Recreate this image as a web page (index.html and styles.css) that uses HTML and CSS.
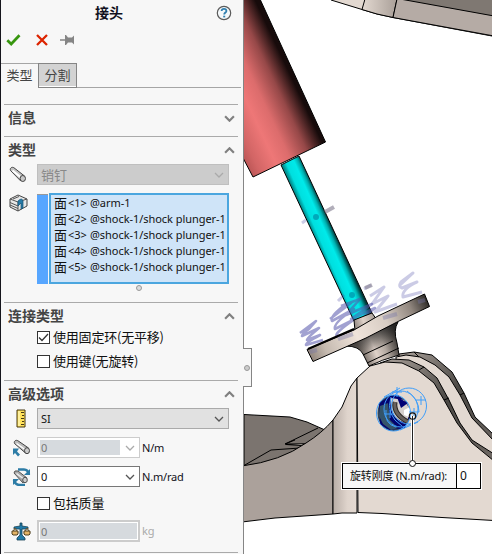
FILE: index.html
```html
<!DOCTYPE html>
<html lang="zh-CN">
<head>
<meta charset="utf-8">
<title>接头</title>
<link rel="stylesheet" href="styles.css">
</head>
<body>
<div class="app">
<aside class="panel">
  <header class="title"><h1>接头</h1>
    <svg class="help" width="16" height="16" viewBox="0 0 16 16"><circle cx="8" cy="8" r="6.7" fill="#f4f8fa" stroke="#5a5a5a" stroke-width="1.2"/><path d="M5.600 6C5.700 4.500 6.700 3.800 8 3.800s2.400.8 2.400 2.100C10.400 7.500 8.200 7.600 8.200 9.600" fill="none" stroke="#2f7faf" stroke-width="1.800"/><path d="M7.200 10.700h2v1.700h-2z" fill="#2f7faf"/></svg>
  </header>
  <div class="actions">
    <svg width="15" height="14" viewBox="0 0 15 14"><path d="M1.300 7.200 5.200 11 13.500 2.200" fill="none" stroke="#37960f" stroke-width="2.700"/></svg>
    <svg width="12" height="12" viewBox="0 0 12 12"><path d="M1 1 11 11M11 1 1 11" stroke="#dc2400" stroke-width="2.300"/></svg>
    <svg width="15" height="12" viewBox="0 0 15 12"><path d="M0 6h6" stroke="#858585" stroke-width="1.500"/><path d="M5 1h1l2 2.500h4L14 1.500v9l-2-2H8L6 11H5z" fill="#858585"/></svg>
  </div>
  <nav class="tabs"><span class="tab on">类型</span><span class="tab off">分割</span></nav>

  <section class="group info"><div class="head"><h2>信息</h2><svg class="chev" viewBox="0 0 10 6"><path d="M1 1 5 5 9 1"/></svg></div></section>

  <section class="group kind">
    <div class="head"><h2>类型</h2><svg class="chev" viewBox="0 0 10 6"><path d="M1 5 5 1 9 5"/></svg></div>
    <div class="row">
      <div class="icon"><svg width="18" height="18" viewBox="0 0 18 18"><path d="M1.500 4.500C.5 2 3 .5 5 1.800L15.500 10l-4 4.800z" fill="#c4c4c4" stroke="#444"/><path d="M3.500 4.500 12 11.500" stroke="#fff" stroke-width="2"/><ellipse cx="13.800" cy="12.500" rx="2.700" ry="3" fill="#c8c8c8" stroke="#444"/></svg></div>
      <div class="combo disabled"><span>销钉</span><svg class="arrow" viewBox="0 0 10 6"><path d="M1 1 5 5 9 1"/></svg></div>
    </div>
    <div class="row pick">
      <div class="icon top"><svg width="19" height="18" viewBox="0 0 19 18"><path d="M1 5 9 1l9 4v7l-9 5-8-4z" fill="#e8e8e8" stroke="#444"/><path d="M1 5l8 3 9-3M9 8v9M1 8.500l8 3.500M1 11l8 3.500M4 5l6-2.500" fill="none" stroke="#555"/><path d="M9 7q4-4 5 0v7l-2 1V9l-3 3z" fill="#287ba7" stroke="#155174" stroke-width=".7"/></svg></div>
      <div class="bar"></div>
      <ul class="list">
        <li><b>面</b><i>&lt;1&gt;</i><span>@arm-1</span></li>
        <li><b>面</b><i>&lt;2&gt;</i><span>@shock-1/shock plunger-1</span></li>
        <li><b>面</b><i>&lt;3&gt;</i><span>@shock-1/shock plunger-1</span></li>
        <li><b>面</b><i>&lt;4&gt;</i><span>@shock-1/shock plunger-1</span></li>
        <li><b>面</b><i>&lt;5&gt;</i><span>@shock-1/shock plunger-1</span></li>
      </ul>
    </div>
    <div class="grip"></div>
  </section>

  <section class="group link">
    <div class="head"><h2>连接类型</h2><svg class="chev" viewBox="0 0 10 6"><path d="M1 5 5 1 9 5"/></svg></div>
    <div class="check"><span class="box"><svg width="11" height="11" viewBox="0 0 11 11"><path d="M1 5.500 4 8.500 10 2" fill="none" stroke="#333" stroke-width="1.300"/></svg></span>使用固定环(无平移)</div>
    <div class="check"><span class="box"></span>使用键(无旋转)</div>
  </section>

  <section class="group adv">
    <div class="head"><h2>高级选项</h2><svg class="chev" viewBox="0 0 10 6"><path d="M1 5 5 1 9 5"/></svg></div>
    <div class="row">
      <div class="icon"><svg width="10" height="19" viewBox="0 0 10 19"><path d="M1 1h8v17H1z" fill="#ffe15b" stroke="#443713"/><path d="M2 2h2v15H2z" fill="#fff09b"/><path d="M5 3.500h3M6 6.500h2M5 9.500h3M6 12.500h2M5 15.500h3" stroke="#443713"/></svg></div>
      <div class="combo"><span>SI</span><svg class="arrow" viewBox="0 0 10 6"><path d="M1 1 5 5 9 1"/></svg></div>
    </div>
    <div class="row">
      <div class="icon"><svg width="19" height="18" viewBox="0 0 19 18"><path d="M2.500 4.500C1.500 2 4 .5 6 1.800L16.500 9l-3 5z" fill="#bbb" stroke="#444"/><path d="M4.500 4.500 13 10.500" stroke="#fff" stroke-width="1.500"/><ellipse cx="15" cy="11.700" rx="2.500" ry="3" fill="#ccc" stroke="#444"/><path d="M1 9.500v6.500l2-2 3 3.500 2-2-3-3 2-3z" fill="#2d7ca6"/></svg></div>
      <div class="field narrow disabled"><span class="value">0</span><svg class="arrow" viewBox="0 0 10 6"><path d="M1 1 5 5 9 1"/></svg></div><span class="unit">N/m</span>
    </div>
    <div class="row">
      <div class="icon"><svg width="19" height="18" viewBox="0 0 19 18"><path d="M6 1.500h6q4 0 5 5M13 17H8q-5 0-6-5" fill="none" stroke="#2d7ca6" stroke-width="2.500"/><path d="M18 1v6h-6zM1 17v-6h6z" fill="#2d7ca6"/><path d="M2 5q0-3 4-2l9 7-4 5z" fill="#aaa" stroke="#555"/><path d="M4.500 5.500l8 6" stroke="#eee" stroke-width="1.500"/><ellipse cx="13" cy="12" rx="2.300" ry="2.700" fill="#ccc" stroke="#555"/></svg></div>
      <div class="field narrow"><span class="value">0</span><svg class="arrow" viewBox="0 0 10 6"><path d="M1 1 5 5 9 1"/></svg></div><span class="unit">N.m/rad</span>
    </div>
    <div class="check"><span class="box"></span>包括质量</div>
    <div class="row mass">
      <div class="icon"><svg width="20" height="19" viewBox="0 0 20 19"><path d="M9 1h2v3l6 1v2h-6v6l3 3v2H6v-2l3-3V7H3V5l6-1z" fill="#217aa8" stroke="#174257" stroke-width=".8"/><path d="M1.500 10.500 4 6l3 4.500M13 10.500 16 6l3 4.500" fill="none" stroke="#755628"/><path d="M1 9h6v3l-1 1H2l-1-1zM13 9h6v3l-1 1h-4l-1-1z" fill="#e5b568" stroke="#51401e"/></svg></div>
      <div class="field disabled flat"><span class="value">0</span></div><span class="unit dim">kg</span>
    </div>
  </section>
  <div class="group end"></div>
</aside>

<main class="view">
<svg class="scene" width="248" height="554" viewBox="244 0 248 554">
  <defs>
    <linearGradient id="red" gradientUnits="userSpaceOnUse" x1="251" y1="178" x2="323" y2="144"><stop offset="0" stop-color="#b85454"/><stop offset=".13" stop-color="#d26565"/><stop offset=".36" stop-color="#ee7777"/><stop offset=".55" stop-color="#dc6c6c"/><stop offset=".78" stop-color="#964848"/><stop offset="1" stop-color="#170b0b"/></linearGradient>
    <linearGradient id="cyan" gradientUnits="userSpaceOnUse" x1="317" y1="242" x2="335" y2="234"><stop offset="0" stop-color="#009090"/><stop offset=".2" stop-color="#00dfdf"/><stop offset=".6" stop-color="#00eaea"/><stop offset=".8" stop-color="#00b0b0"/><stop offset="1" stop-color="#003c3c"/></linearGradient>
    <linearGradient id="disc" gradientUnits="userSpaceOnUse" x1="309" y1="357" x2="427" y2="300"><stop offset="0" stop-color="#8d8178"/><stop offset=".14" stop-color="#c5bab0"/><stop offset=".4" stop-color="#efe3da"/><stop offset=".65" stop-color="#d8cdc4"/><stop offset=".86" stop-color="#91877f"/><stop offset="1" stop-color="#302d2a"/></linearGradient>
    <linearGradient id="neck" gradientUnits="userSpaceOnUse" x1="361" y1="354" x2="399" y2="339"><stop offset="0" stop-color="#6d655f"/><stop offset=".35" stop-color="#dfd2c9"/><stop offset=".6" stop-color="#b3a9a1"/><stop offset="1" stop-color="#282523"/></linearGradient>
    <linearGradient id="shade" gradientUnits="userSpaceOnUse" x1="375" y1="329" x2="382" y2="348"><stop offset="0" stop-color="#222" stop-opacity=".8"/><stop offset="1" stop-color="#222" stop-opacity="0"/></linearGradient>
    <linearGradient id="edge"><stop offset="0" stop-color="#b8ada6"/><stop offset=".6" stop-color="#dfd4cc"/><stop offset="1" stop-color="#e3d9d1"/></linearGradient>
    <linearGradient id="strip" x1="0" y1="0" x2=".7" y2="1"><stop offset="0" stop-color="#aca39c"/><stop offset=".45" stop-color="#4a4743"/><stop offset="1" stop-color="#78716c"/></linearGradient>
    <linearGradient id="roof"><stop offset="0" stop-color="#e3d9d1"/><stop offset="1" stop-color="#a99f98"/></linearGradient>
  </defs>
  <g stroke="#000" stroke-width="1" stroke-linejoin="round">
    <path d="M331 0 362 9.500 377 14 393 17.500 492 36V-2H331z" fill="#e3d9d1"/>
    <path d="M365-1 362 9.500 377 14 393 17.500 397-1z" fill="url(#roof)"/>
    <path d="M397-1 393 17.500 494 36V-1z" fill="#b5aba5"/>
    <path d="M400-1 494 16V-2z" fill="#7f7872"/>

    <path d="M399 354 414 352 432 355 452 372 464 393 475 417 494 435V520L400 500z" fill="url(#strip)"/>
    <path d="M396 357 406 355 420 357 435 365 449 377 460 395 472 418 494 441V520L400 500z" fill="#e3d9d1"/>
    <path d="M380 363 392 359 409 360 424 367 437 378 449 400 460 423 472 440 494 454V520L400 500z" fill="url(#strip)"/>
    <path d="M244 414.500 290 417 307 422 325 430 310 450 244 470z" fill="#7b746f"/>
    <path d="M318 428 285 444 307 444.500 300 448 271 450 244 465.500M285 444l10-4" fill="none"/>
    <path d="M286 444.500l22-1-7 2z" fill="#e5dcd5"/>
    <path d="M242 466Q281 461 306 443 322 433 333 420V514L275 518 242 522z" fill="#aba19b"/>
    <path d="M333 420 342 407 351 386 357 378V513H342L333 514z" fill="url(#edge)"/>
    <path d="M357 378 370 366 385 362 402 363 419 371 434 383 444 400 457 423 472 443 494 461V520.500L442 517.500 382 513.500 358 512.500z" fill="#e3d9d1"/>
    <path d="M444 400l5-2M460 395l4-2M419 357l-5-5M424 367l-5 3" fill="none"/>

    <path d="M242-2H259.500L325.500 142 253 177 242 156z" fill="url(#red)"/>
    <path d="M281 165 299 156 372 313 354 321z" fill="url(#cyan)"/>
  </g>
  <g fill="none" stroke="#5555ac" stroke-width="2.600" stroke-linejoin="round" opacity=".55">
    <path d="M300 333 316 321 309 329Q302 334 302 336L319 328Q307 338 307 340L320 335Q305 343 306 345L323 340"/>
    <path d="M330 319 351 303 341 308Q330 317 332 321L354 309Q333 323 335 329L355 319Q333 334 337 336L352 334"/>
    <path d="M341 306 360 299 346 315 372 304 351 319 375 308 358 322"/>
  </g>
  <g fill="none" stroke="#5555ac" stroke-width="3" stroke-linejoin="round" opacity=".3">
    <path d="M399 286 413 273 401 282Q398 287 402 288L417 282Q401 290 403 297L422 292"/>
    <path d="M370 296 384 287 372 304 388 296 375 312 397 304M338 301l6-6M302 223l4-3M364 289l7-4"/>
  </g>
  <circle cx="316" cy="217" r="3" fill="#00a9ba"/><circle cx="352" cy="295" r="3" fill="#00a9ba"/>
  <path d="M325 212 334 207M365 288l7-3" stroke="#918c9d" stroke-width="4" opacity=".7"/>
  <path d="M354 320 372 313 377 320 355 331z" fill="url(#neck)" stroke="#000"/>
  <g stroke="#000">
    <path d="M346 346Q359 346 363 354L369 366Q381 360 399 355L397 343Q393 330 398 322z" fill="url(#neck)"/>
    <path d="M346 346Q360 347 364 355L396 341Q393 332 397 322z" fill="url(#shade)" stroke="none"/>
    <path d="M363 355 393 341M367 363 399 348" fill="none"/>
    <path d="M307 349.500 354 330 378 316 424.500 294 429.500 306.500 399 321 366 338 313 361.500z" fill="url(#disc)"/>
    <path d="M308 349 354 329" stroke-width="2" fill="none"/>
  </g>
  <path d="M338 339l15-5M383 318l14-4M310 352l7-2M418 302l7-2" stroke="#7777a8" stroke-width="4" opacity=".4"/>

  <g>
    <ellipse cx="393.500" cy="413" rx="16" ry="18" fill="#33485a"/>
    <path d="M379 403 390 396 398 395 407 404 410 416 405 428 389 430 380 424z" fill="#04046e"/>
    <path d="M380 406l8-3 2 17 8 8-7 2-8-6-4-8z" fill="#34546a"/>
    <path d="M391 398Q388 418 406 423L411 411 404 400z" fill="#d6d0cd"/>
    <path d="M397 397 408 403 401 408z" fill="#000075"/>
    <path d="M404 410 410 407 412 418 404 415z" fill="#fff"/>
    <path d="M395 402Q393 414 408 422" fill="none" stroke="#292522" stroke-width="5"/>
    <path d="M395 402Q393 414 408 422" fill="none" stroke="#68615c" stroke-width="3"/>
    <g fill="none" stroke="#3f9efa"><ellipse cx="393.500" cy="413" rx="17" ry="18"/><ellipse cx="409" cy="406" rx="17.500" ry="18"/><ellipse cx="401" cy="409" rx="17" ry="18"/><path d="M384 397 400 388M400 430 418 422M386 410Q384 424 396 427M391 397Q385 415 402 426M407 391Q419 399 419 412M397 387v10M392 392h10M421 396v9M416 400h10M390 410v8M385 414h9M414 408v8M409 412h10"/></g>
  </g>
  <path d="M412.500 416V463" stroke="#fff" stroke-width="3"/><path d="M412.500 416V463" stroke="#222"/>
  <circle cx="412.500" cy="416" r="3.200" fill="none" stroke="#111" stroke-width="1.200"/>
</svg>
<div class="handle"><span></span></div>
<div class="callout"><span class="label">旋转刚度 (N.m/rad):</span><span class="num">0</span></div>
<div class="pin"></div>
</main>
</div>
</body>
</html>
```
FILE: styles.css
```css
* { box-sizing: border-box; }
body { margin: 0; width: 492px; height: 554px; overflow: hidden; background: #fff; font: 11px/16px "Noto Sans", "Noto Sans CJK SC", sans-serif; color: #111; }
h1, h2, ul { margin: 0; padding: 0; }
svg { display: block; flex: none; }
.app { display: flex; height: 554px; }
.panel { flex: none; width: 244px; height: 554px; background: #f7f7f7; border-left: 1px solid #15151c; border-right: 1px solid #858585; }
.title { display: flex; height: 26px; align-items: center; padding-left: 94px; }
.title h1 { font: bold 14px/20px "Noto Sans CJK SC", sans-serif; flex: 1; color: #111120; margin-top: -2px; }
.help { margin-right: 11px; }
.actions { display: flex; height: 37px; align-items: center; padding: 0 0 9px 5px; }
.actions svg:nth-child(2) { margin-left: 15px; }
.actions svg:nth-child(3) { margin-left: 12px; }
.tabs { display: flex; height: 25px; width: 240px; border-bottom: 1px solid #a5a5a5; }
.tab { height: 25px; border-top: 1px solid #a5a5a5; font: 13px/21px "Noto Sans CJK SC", sans-serif; text-align: center; color: #444; }
.tab.on { background: #f7f7f7; width: 37px; }
.tab.off { width: 39px; border: 1px solid #858585; background: #d3d3d3; box-shadow: inset 0 -1px #fff; }
.group { margin: 0 5px 0 3px; border-top: 1px solid #aaa; }
.info { margin-top: 16px; height: 32px; }
.kind { height: 166px; }
.link { height: 78px; }
.adv { height: 172px; }
.head { display: flex; height: 27px; align-items: center; padding: 0 3px 0 4px; justify-content: space-between; }
.head h2 { font: bold 14px/20px "Noto Sans CJK SC", sans-serif; color: #444; margin-top: -3px; }
.chev { width: 11px; height: 7px; fill: none; stroke: #808080; stroke-width: 2; }
.row { display: flex; height: 21px; align-items: center; margin-bottom: 8px; }
.icon { width: 33px; flex: none; display: flex; justify-content: center; align-items: center; padding-left: 1px; }
.kind .icon { padding: 0 5px 0 0; }
.kind .icon.top { align-self: flex-start; padding-top: 1px; }
.combo, .field { display: flex; align-items: center; justify-content: space-between; height: 21px; width: 192px; padding: 0 4px 0 3px; border: 1px solid #aaa; background: #e1e1e1; }
.arrow { width: 10px; height: 6px; fill: none; stroke: #555; stroke-width: 1.3; }
.combo.disabled { background: #ccc; border-color: #bfbfbf; color: #888; font-size: 13px; }
.disabled .arrow { stroke: #aaa; }
.row.pick { height: 91px; margin-bottom: 1px; }
.bar { width: 11px; height: 90px; background: #57a6ff; border-top: 1px solid #999; margin-right: 1px; }
.list { width: 180px; height: 91px; border: 2px solid #4ba6df; background: #cfe4f8; list-style: none; padding: 0 0 0 3px; overflow: hidden; }
.list li { display: flex; height: 16px; line-height: 16px; white-space: nowrap; }
.list b { flex: none; font: 13px/16px "Noto Sans CJK SC", sans-serif; width: 14px; }
.list i { flex: none; font-style: normal; width: 22px; }
.list span { letter-spacing: -.05px; }
.grip { width: 6px; height: 6px; margin-left: 132px; border: 1px solid #999; border-radius: 50%; background: #ddd; }
.check { display: flex; height: 24px; align-items: center; margin-left: 33px; gap: 3px; font: 13px/20px "Noto Sans CJK SC", sans-serif; letter-spacing: -.2px; }
.box { width: 13px; height: 13px; border: 1px solid #333; background: #fff; }
.link .head { height: 22px; padding-top: 4px; }
.field.narrow { width: 103px; background: #fff; border-color: #777; }
.field.narrow.disabled { border-color: #ccc; padding-left: 2px; color: #777; }
.disabled .value { background: #d6dade; height: 15px; width: 80px; padding-left: 1px; line-height: 15px; }
.field.flat { width: 103px; height: 22px; background: #d6dade; border: 2px solid #ccc; box-shadow: inset 0 0 0 1px #fff; color: #777; padding-left: 1px; }
.unit { margin-left: 2px; color: #111120; letter-spacing: -.2px; }
.unit.dim { color: #aaa; }
.adv .check { height: 24px; margin-top: -4px; }
.mass { height: 22px; margin: 5px 0 0; }
.view { flex: none; position: relative; width: 248px; height: 554px; background: #fff; }
.handle { position: absolute; left: -1px; top: 348px; width: 9px; height: 39px; background: #f7f7f7; border: 1px solid #858585; border-left: 0; display: flex; align-items: center; justify-content: center; }
.handle span { width: 6px; height: 6px; border: 1px solid #999; border-radius: 50%; background: #ccc; }
.callout { position: absolute; left: 98px; top: 463px; width: 139px; height: 26px; display: flex; background: #f7f7f7; border: 1px solid #000; outline: 1px solid #fff; line-height: 24px; white-space: nowrap; }
.label { width: 114px; padding-left: 7px; border-right: 1px solid #000; letter-spacing: -.15px; }
.num { flex: 1; background: #fff; padding-left: 3px; font-size: 12px; }
.pin { position: absolute; left: 165px; top: 460px; width: 7px; height: 7px; border: 1px solid #111; border-radius: 50%; background: #fff; }
```
